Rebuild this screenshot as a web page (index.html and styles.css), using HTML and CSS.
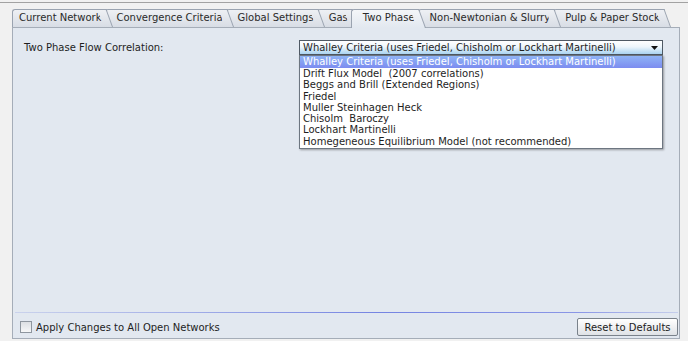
FILE: index.html
```html
<!DOCTYPE html>
<html lang="en">
<head>
    <meta charset="UTF-8">
    <title>Network Options</title>
    <link rel="stylesheet" href="styles.css">
</head>
<body>

    <div class="window">
        <!-- Tab strip -->
        <div class="tabs">
            <div class="tab first">Current Network</div>
            <div class="tab">Convergence Criteria</div>
            <div class="tab">Global Settings</div>
            <div class="tab">Gas</div>
            <div class="tab selected">Two Phase</div>
            <div class="tab">Non-Newtonian &amp; Slurry</div>
            <div class="tab">Pulp &amp; Paper Stock</div>
        </div>

        <!-- Two Phase page -->
        <div class="panel">
            <div class="top-row">
                <div class="field-label">Two Phase Flow Correlation:</div>
                <div class="combo">
                    <div class="combo-box">
                        <span>Whalley Criteria (uses Friedel, Chisholm or Lockhart Martinelli)</span>
                        <svg class="arrow" width="7" height="4" viewBox="0 0 7 4"><polygon points="0,0 7,0 3.5,4" fill="#111"/></svg>
                    </div>
                    <ul class="combo-list">
                        <li class="active">Whalley Criteria (uses Friedel, Chisholm or Lockhart Martinelli)</li>
                        <li>Drift Flux Model&nbsp; (2007 correlations)</li>
                        <li>Beggs and Brill (Extended Regions)</li>
                        <li>Friedel</li>
                        <li>Muller Steinhagen Heck</li>
                        <li>Chisolm&nbsp; Baroczy</li>
                        <li>Lockhart Martinelli</li>
                        <li>Homegeneous Equilibrium Model (not recommended)</li>
                    </ul>
                </div>
            </div>

            <div class="spacer"></div>
            <div class="divider"></div>

            <div class="bottom-row">
                <label class="check">
                    <span class="check-box"></span>
                    <span>Apply Changes to All Open Networks</span>
                </label>
                <button class="button">Reset to Defaults</button>
            </div>
        </div>
    </div>

</body>
</html>
```

FILE: styles.css
```css
body {
    margin: 0;
    background-color: #f1f1f1;
    font-family: "DejaVu Sans", Verdana, sans-serif;
    font-size: 10px;
    color: #1e1e1e;
}
.window {
    margin-top: 2px;
    border-top: 1px solid #a2a2a2;
    height: 338px;
    box-sizing: border-box;
}
.tabs {
    display: flex;
    align-items: flex-start;
    position: relative;
    z-index: 1;
    height: 19px;
    margin: 6px 0 -1px 12px;
}
.tab {
    position: relative;
    box-sizing: border-box;
    height: 18px;
    line-height: 16px;
    padding: 0 3px 0 11px;
    border: 1px solid #9aa3b0;
    border-right: none;
    border-bottom: none;
    border-radius: 3px 0 0 0;
    background: linear-gradient(#eef0f4, #d8dde5);
    color: #2a2a2a;
    white-space: nowrap;
}
.tab::after {
    content: "";
    position: absolute;
    top: -1px;
    bottom: 0;
    right: -8px;
    width: 8px;
    border-top: 1px solid #9aa3b0;
    border-right: 1px solid #9aa3b0;
    background: linear-gradient(#eef0f4, #d8dde5);
    transform: skewX(20deg);
    transform-origin: bottom left;
}
.tab.first {
    padding-left: 6px;
}
.tab:nth-child(1) { z-index: 7; }
.tab:nth-child(2) { z-index: 6; }
.tab:nth-child(3) { z-index: 5; }
.tab:nth-child(4) { z-index: 4; }
.tab:nth-child(6) { z-index: 3; }
.tab:nth-child(7) { z-index: 2; }
.tab.selected {
    z-index: 9;
    height: 19px;
    background: linear-gradient(#f4f6f9, #e2e8f0);
}
.tab.selected::after {
    background: linear-gradient(#f4f6f9, #e2e8f0);
}
.panel {
    display: flex;
    flex-direction: column;
    box-sizing: border-box;
    height: 312px;
    margin: 0 8px 0 12px;
    border: 1px solid #a5adb8;
    background-color: #e2e8f0;
}
.top-row {
    display: flex;
    align-items: flex-start;
    padding: 12px 0 0 11px;
}
.field-label {
    width: 275px;
    line-height: 15px;
}
.combo {
    position: relative;
    width: 364px;
}
.combo-box {
    display: flex;
    align-items: center;
    justify-content: space-between;
    box-sizing: border-box;
    height: 15px;
    padding: 0 4px 0 3px;
    border: 1px solid #4f5964;
    background: linear-gradient(#ffffff 0%, #eef6fc 45%, #a9d3f0 100%);
    line-height: 13px;
}
.arrow {
    display: block;
}
.combo-list {
    position: absolute;
    top: 15px;
    left: 0;
    width: 364px;
    box-sizing: border-box;
    margin: 0;
    padding: 0 0 1px 0;
    list-style: none;
    border: 1px solid #6d7681;
    background-color: #ffffff;
    box-shadow: 1px 1px 2px rgba(0, 0, 0, 0.35);
}
.combo-list li {
    line-height: 11.3px;
    padding-left: 3px;
    white-space: nowrap;
}
.combo-list li.active {
    color: #ffffff;
    line-height: 12px;
    background: linear-gradient(#8fb4f6, #7c8cf0);
}
.spacer {
    flex: 1;
}
.divider {
    height: 1px;
    margin: 0 1px 0 2px;
    background: linear-gradient(to right, rgba(130, 145, 225, 0.25), #7584e2 55%, #8a96e6 85%, rgba(130, 145, 225, 0.3));
}
.bottom-row {
    display: flex;
    align-items: center;
    justify-content: space-between;
    margin-top: 5px;
    padding: 0 1px 2px 7px;
}
.check {
    display: flex;
    align-items: center;
}
.check-box {
    width: 12px;
    height: 12px;
    box-sizing: border-box;
    margin-right: 4px;
    border: 1px solid #8e969f;
    background: linear-gradient(#dcdfe3, #f6f7f8);
}
.button {
    width: 101px;
    height: 18px;
    padding: 0;
    border: 1px solid #7a828b;
    border-radius: 2px;
    background: linear-gradient(#ffffff, #dfe2e6);
    font-family: "DejaVu Sans", Verdana, sans-serif;
    font-size: 10px;
    color: #222;
}
```
